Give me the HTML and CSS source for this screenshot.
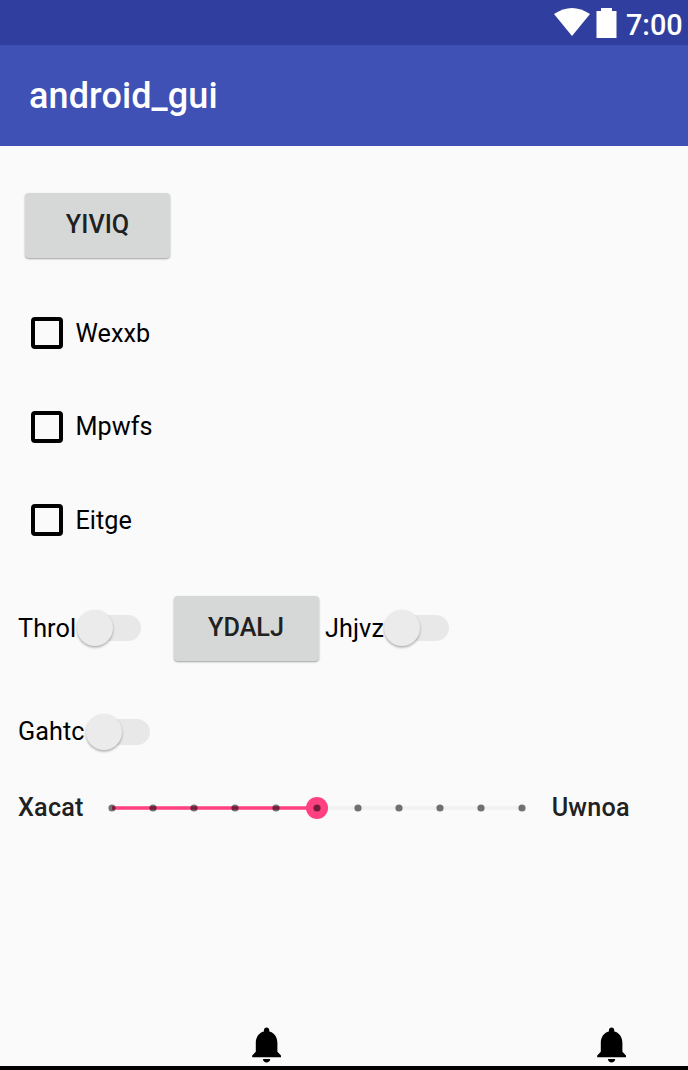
FILE: index.html
```html
<!DOCTYPE html>
<html lang="en">
<head>
<meta charset="utf-8">
<title>android_gui</title>
<link rel="stylesheet" href="styles.css">
</head>
<body>
<header class="status">
  <svg class="wifi" width="36" height="28" viewBox="0 0 36 28"><path d="M0 6Q18-6 36 6L18 28Z" fill="#fff"/></svg>
  <svg class="battery" width="21" height="30" viewBox="0 0 21 30"><path d="M0.5 3H5V0H16V3H20.5V30H.5Z" fill="#fff"/></svg>
  <span class="clock">7:00</span>
</header>
<div class="appbar"><h1 class="title">android_gui</h1></div>
<main class="content">
  <button class="btn btn-first">YIVIQ</button>
  <div class="checks">
    <label class="check"><span class="box"></span><span class="check-text">Wexxb</span></label>
    <label class="check"><span class="box"></span><span class="check-text">Mpwfs</span></label>
    <label class="check"><span class="box"></span><span class="check-text">Eitge</span></label>
  </div>
  <div class="row">
    <span class="label throl">Throl</span><span class="switch"><span class="thumb"></span></span>
    <button class="btn btn-inline">YDALJ</button>
    <span class="label jhjvz">Jhjvz</span><span class="switch"><span class="thumb"></span></span>
  </div>
  <div class="row row-second">
    <span class="label gahtc">Gahtc</span><span class="switch"><span class="thumb"></span></span>
  </div>
  <div class="seek-row">
    <span class="strong xacat">Xacat</span>
    <svg class="seek" width="424" height="24" viewBox="0 0 424 24">
      <path d="M7 12H417" stroke="#f1f1f1" stroke-width="3.6"/>
      <path d="M7 12H212" stroke="#ff4081" stroke-width="3.6"/>
      <circle cx="212" cy="12" r="11" fill="#ff4081"/>
      <g fill="#000" fill-opacity=".54">
        <circle cx="7" cy="12" r="3.6"/><circle cx="48" cy="12" r="3.6"/><circle cx="89" cy="12" r="3.6"/><circle cx="130" cy="12" r="3.6"/><circle cx="171" cy="12" r="3.6"/><circle cx="212" cy="12" r="3.6"/><circle cx="253" cy="12" r="3.6"/><circle cx="294" cy="12" r="3.6"/><circle cx="335" cy="12" r="3.6"/><circle cx="376" cy="12" r="3.6"/><circle cx="417" cy="12" r="3.6"/>
      </g>
    </svg>
    <span class="strong uwnoa">Uwnoa</span>
  </div>
</main>
<footer class="bells">
  <svg class="bell" viewBox="0 0 24 24"><path d="M12 22c1.1 0 2-.9 2-2h-4c0 1.1.89 2 2 2zm6-6v-5c0-3.07-1.64-5.64-4.5-6.32V4c0-.83-.67-1.5-1.5-1.5s-1.5.67-1.5 1.5v.68C7.63 5.36 6 7.92 6 11v5l-2 2v1h16v-1l-2-2z"/></svg>
  <svg class="bell" viewBox="0 0 24 24"><path d="M12 22c1.1 0 2-.9 2-2h-4c0 1.1.89 2 2 2zm6-6v-5c0-3.07-1.64-5.64-4.5-6.32V4c0-.83-.67-1.5-1.5-1.5s-1.5.67-1.5 1.5v.68C7.63 5.36 6 7.92 6 11v5l-2 2v1h16v-1l-2-2z"/></svg>
</footer>
<div class="navbar"></div>
</body>
</html>
```
FILE: styles.css
```css
* { box-sizing: border-box; }
body {
  margin: 0;
  height: 1070px;
  display: flex;
  flex-direction: column;
  overflow: hidden;
  background: #fafafa;
  color: #000;
  font: 400 25.2px/30px Roboto, sans-serif;
  white-space: nowrap;
}
svg { display: block; flex: none; }
.status {
  height: 45px;
  flex: none;
  display: flex;
  align-items: flex-start;
  padding: 8px 0 0 553.5px;
  background: #303f9f;
  color: #fff;
}
.battery { margin-left: 6px; }
.clock { margin-left: 9.5px; padding-top: 1px; font-size: 28.8px; font-weight: 500; line-height: 32px; }
.appbar {
  height: 101px;
  flex: none;
  display: flex;
  align-items: center;
  padding-left: 29px;
  background: #3f51b5;
  color: #fff;
}
.title { margin: 0; font-size: 36px; line-height: 42px; font-weight: 500; letter-spacing: .1px; }
.content { flex: none; height: 876px; padding-top: 47px; }
.btn {
  display: block;
  flex: none;
  width: 145px;
  height: 65px;
  padding: 0 0 1px;
  border: 0;
  border-radius: 4px;
  background: #d6d8d7;
  box-shadow: 0 1px 2px rgba(0, 0, 0, .36);
  color: #212121;
  font: 500 25.2px/30px Roboto, sans-serif;
}
.btn-first { margin-left: 25px; }
.checks { padding-top: 59px; display: grid; gap: 61.6px; }
.check { display: flex; align-items: center; height: 32px; padding-left: 31px; }
.box { width: 32px; height: 32px; border: 4px solid #000; border-radius: 4px; }
.check-text { margin-left: 12.4px; padding-top: 1px; letter-spacing: .1px; }
.row { display: flex; align-items: center; height: 66px; margin-top: 59px; padding-left: 18px; }
.row-second { margin-top: 38px; }
.label { flex: none; letter-spacing: .1px; }
.throl { width: 58px; padding-top: 1px; }
.jhjvz { width: 58.5px; margin-left: 6.5px; padding-top: 1px; }
.gahtc { width: 67px; }
.switch { display: flex; align-items: center; width: 54px; height: 26px; margin-left: 11px; border-radius: 13px; background: #e8e8e8; }
.thumb { flex: none; width: 36px; height: 36px; margin-left: -10.5px; border-radius: 50%; background: #ebebeb; box-shadow: 0 1.5px 2.5px rgba(0, 0, 0, .32); }
.btn-inline { margin-left: 32.5px; padding-bottom: 0; }
.seek-row { display: flex; align-items: center; height: 30px; margin-top: 28px; padding-left: 18px; }
.strong { color: #212121; font-weight: 500; flex: none; letter-spacing: .2px; }
.xacat { width: 87.2px; }
.uwnoa { margin-left: 22.5px; }
.bells { display: flex; gap: 302.2px; height: 43.5px; padding: .7px 0 0 244.8px; }
.bell { width: 43.2px; height: 43.2px; }
.navbar { flex: none; height: 4.5px; background: #000; }
```
